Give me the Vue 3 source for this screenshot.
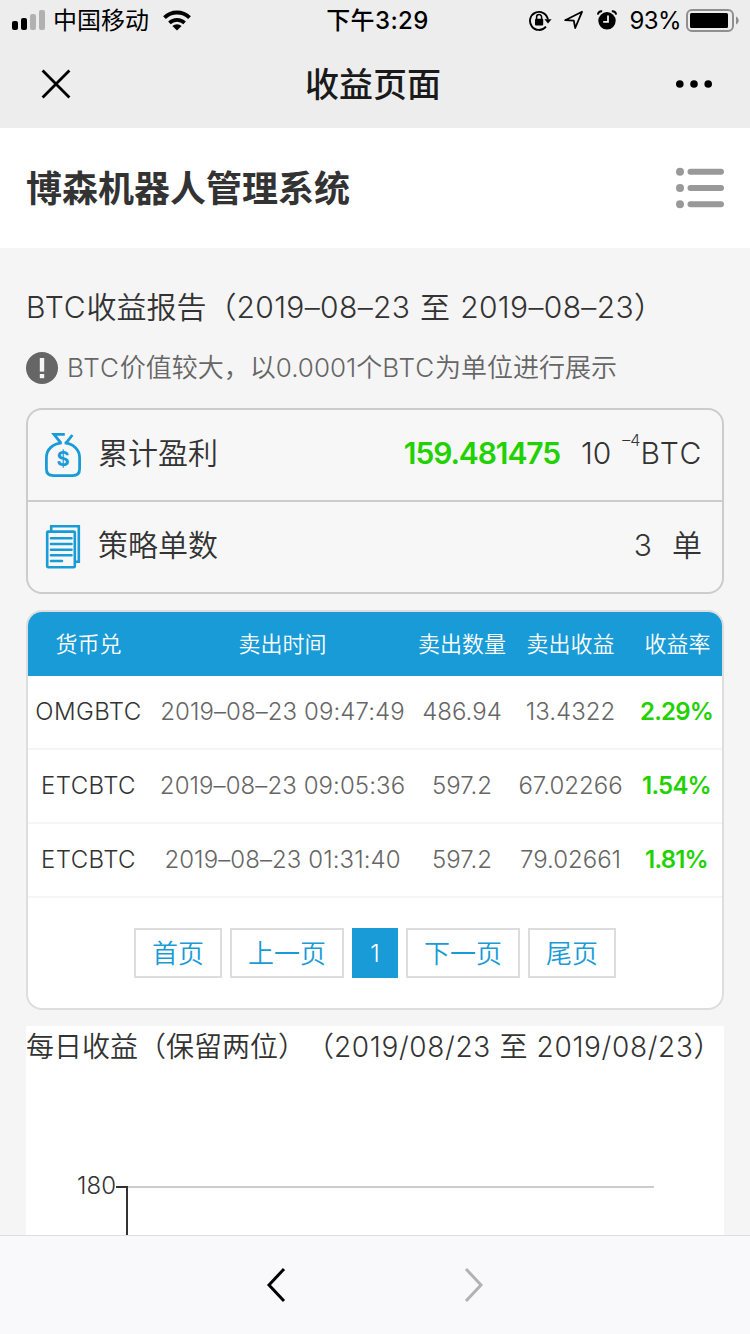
<template>
<div class="page">
    <div class="status-bar">
        <div class="status-left">
            <svg class="signal" width="33" height="20" viewBox="0 0 33 20">
                <rect x="0" y="11" width="6" height="9" rx="2"/>
                <rect x="9" y="8" width="6" height="12" rx="2"/>
                <rect x="18" y="4" width="6" height="16" rx="2" fill="#b1b1b1"/>
                <rect x="27" y="0" width="6" height="20" rx="2" fill="#b1b1b1"/>
            </svg>
            <span class="carrier">中国移动</span>
            <svg class="wifi" width="28" height="21" viewBox="0 0 28 21">
                <path d="M1.5 7.6a18 18 0 0 1 25 0" fill="none" stroke="#000" stroke-width="4"/>
                <path d="M6.4 12.9a11 11 0 0 1 15.2 0" fill="none" stroke="#000" stroke-width="3.6"/>
                <path d="M14 20.4l-4.6-4.4a6.6 6.6 0 0 1 9.2 0z"/>
            </svg>
        </div>
        <div class="clock">下午3:29</div>
        <div class="status-right">
            <svg width="23" height="21" viewBox="0 0 23 21">
                <path d="M17 16.6A9 9 0 1 1 18.9 9.5" fill="none" stroke="#000" stroke-width="1.9"/>
                <path d="M15.4 9.2h7.2l-3.6 4.2z"/>
                <rect x="6" y="8.8" width="8.2" height="6.6" rx="1"/>
                <path d="M7.6 9V7a2.5 2.5 0 0 1 5 0v2" fill="none" stroke="#000" stroke-width="1.5"/>
            </svg>
            <svg class="location" width="20" height="20" viewBox="0 0 20 20">
                <path d="M1.2 10.2L18 1.8 11.2 18 9.8 10.6z" fill="none" stroke="#000" stroke-width="1.8" stroke-linejoin="round"/>
            </svg>
            <svg class="alarm" width="20" height="20" viewBox="0 0 20 20">
                <circle cx="10" cy="10.8" r="8.7"/>
                <path d="M.8 4.6C1.2 2.4 3 1 5.2 1.3M19.2 4.6C18.8 2.4 17 1 14.8 1.3" fill="none" stroke="#000" stroke-width="1.8"/>
                <path d="M11 5.4v6.4H6.2" fill="none" stroke="#ededed" stroke-width="1.8"/>
            </svg>
            <span class="percent">93%</span>
            <svg width="53" height="23" viewBox="0 0 53 23">
                <rect x="1" y="1" width="46" height="21" rx="5" fill="none" stroke="#8f8f8f" stroke-width="2"/>
                <rect x="4" y="4" width="38" height="15" rx="1.5"/>
                <path d="M50 7.5c3.6 1.6 3.6 6.6 0 8z" fill="#8f8f8f"/>
            </svg>
        </div>
    </div>

    <div class="nav-bar">
        <svg width="30" height="30" viewBox="0 0 30 30">
            <path d="M1.6 1.6l26.8 26.8M28.4 1.6L1.6 28.4" fill="none" stroke="#000" stroke-width="2.8"/>
        </svg>
        <div class="nav-title">收益页面</div>
        <svg width="38" height="10" viewBox="0 0 38 10">
            <circle v-for="n in 3" :key="n" :cx="n * 14.2 - 9.4" cy="5" r="3.8"/>
        </svg>
    </div>

    <header class="header">
        <h1>博森机器人管理系统</h1>
        <svg width="48" height="42" viewBox="0 0 48 42" fill="#999">
            <template v-for="n in 3" :key="n">
                <circle cx="4" :cy="n * 16.2 - 11.4" r="4"/>
                <rect x="11.5" :y="n * 16.2 - 14.4" width="36.5" height="6" rx="3"/>
            </template>
        </svg>
    </header>

    <main class="content">
        <h2><span class="btc">BTC</span>收益报告（<span class="range">{{ debut }} 至 {{ fin }}</span>）</h2>
        <div class="tip">
            <svg width="32" height="32" viewBox="0 0 32 32">
                <circle cx="16" cy="16" r="16" fill="#666"/>
                <rect x="13.8" y="6" width="4.4" height="13.6" fill="#f5f5f5"/>
                <rect x="13.8" y="22" width="4.4" height="4.2" fill="#f5f5f5"/>
            </svg>
            <p><span class="btc">BTC</span>价值较大，以0.0001个<span class="btc">BTC</span>为单位进行展示</p>
        </div>

        <div class="summary">
            <div class="summary-row">
                <svg width="38" height="46" viewBox="0 0 38 46" fill="none" stroke="#189bd7" stroke-width="2.8">
                    <path d="M20.8 2.4H10l7 8.8M28.4 3l-6.4 8.2M17.8 10.9C9 11.4 2.4 17.5 2.4 25.5V37c0 4.6 2.5 6.6 7 6.6h19.2c4.5 0 7-2 7-6.6V25.5c0-8-6.6-14.1-15-14.6"/>
                    <text class="dollar" x="19" y="33.6">$</text>
                </svg>
                <span class="label">累计盈利</span>
                <span class="profit">159.481475</span>
                <span class="unit">10</span>
                <span class="power">–4</span>
                <span class="suffix">BTC</span>
            </div>
            <div class="summary-row">
                <svg width="38" height="46" viewBox="0 0 38 46" fill="none" stroke="#189bd7" stroke-width="2.6">
                    <path d="M7.2 7V2.2h27.6v35.6h-4"/>
                    <rect x="3.2" y="7.6" width="27.6" height="35.6" rx="1"/>
                    <path d="M7 14.3h20.5M7 20h20.5M7 25.7h20.5M7 31.3h20.5M7 37h11" stroke-linecap="round"/>
                </svg>
                <span class="label">策略单数</span>
                <span class="count">3</span>
                <span>单</span>
            </div>
        </div>

        <div class="orders">
            <div class="orders-head">
                <span v-for="titre in colonnes" :key="titre">{{ titre }}</span>
            </div>
            <div class="orders-row" v-for="ligne in lignes" :key="ligne.date">
                <span class="pair">{{ ligne.paire }}</span>
                <span class="date">{{ ligne.date }}</span>
                <span>{{ ligne.quantite }}</span>
                <span>{{ ligne.gain }}</span>
                <span class="rate">{{ ligne.taux }}</span>
            </div>
            <div class="pagination">
                <button>首页</button>
                <button>上一页</button>
                <button class="active">1</button>
                <button>下一页</button>
                <button>尾页</button>
            </div>
        </div>

        <div class="chart">
            <h3>每日收益（保留两位）（<span class="range">2019/08/23 至 2019/08/23</span>）</h3>
            <svg width="698" height="175" viewBox="0 0 698 175">
                <path d="M102 121h526" stroke="#ccc" stroke-width="2"/>
                <path d="M90 121h12M101 120v55" stroke="#333" stroke-width="2"/>
                <text class="tick" x="90" y="128">180</text>
            </svg>
        </div>
    </main>

    <footer class="toolbar">
        <svg width="20" height="36" viewBox="0 0 20 36">
            <path d="M18 2L3 18l15 16" fill="none" stroke="#000" stroke-width="3"/>
        </svg>
        <svg width="20" height="36" viewBox="0 0 20 36">
            <path d="M2 2l15 16L2 34" fill="none" stroke="#b2b2b2" stroke-width="3"/>
        </svg>
    </footer>
</div>
</template>

<script setup>
import { ref } from 'vue'

const debut = ref('2019–08–23')
const fin = ref('2019–08–23')

const colonnes = ['货币兑', '卖出时间', '卖出数量', '卖出收益', '收益率']

const lignes = ref([
    { paire: 'OMGBTC', date: '2019–08–23 09:47:49', quantite: '486.94', gain: '13.4322', taux: '2.29%' },
    { paire: 'ETCBTC', date: '2019–08–23 09:05:36', quantite: '597.2', gain: '67.02266', taux: '1.54%' },
    { paire: 'ETCBTC', date: '2019–08–23 01:31:40', quantite: '597.2', gain: '79.02661', taux: '1.81%' },
])
</script>

<style>
body{
    margin: 0;
    background-color: #f5f5f5;
}
</style>

<style scoped>
*{box-sizing: border-box; margin: 0; padding: 0;}
.page{
    width: 750px;
    height: 1334px;
    display: flex;
    flex-direction: column;
    overflow: hidden;
    background-color: #f5f5f5;
    color: #333;
    font-family: Inter, "Noto Sans CJK SC", sans-serif;
    font-weight: 350;
    text-spacing-trim: space-all;
    white-space: nowrap;
}
svg{
    display: block;
    flex: none;
}

.status-bar{
    height: 40px;
    padding: 0 11px 0 12px;
    display: grid;
    grid-template-columns: 1fr auto 1fr;
    align-items: center;
    background-color: #ededed;
    color: #000;
    font-size: 24px;
    font-weight: 400;
    line-height: 38px;
}
.status-left, .status-right{
    display: flex;
    align-items: center;
}
.status-right{
    justify-content: flex-end;
}
.carrier{
    margin: 0 14px 0 8px;
    padding-top: 2px;
}
.clock{
    padding: 2px 0 0 4px;
    font-weight: 500;
    letter-spacing: 0.4px;
}
.location{
    margin-left: 12px;
}
.alarm{
    margin-left: 13px;
}
.percent{
    margin: 0 5px 0 13px;
    padding-top: 2px;
    letter-spacing: -0.6px;
}

.nav-bar{
    height: 88px;
    padding: 0 37px 0 41px;
    display: flex;
    align-items: center;
    justify-content: space-between;
    background-color: #ededed;
    color: #1a1a1a;
}
.nav-title{
    margin-bottom: 4px;
    font-size: 34px;
    font-weight: 500;
}

.header{
    height: 120px;
    padding: 0 26px;
    display: flex;
    align-items: center;
    justify-content: space-between;
    background-color: #fff;
}
.header h1{
    margin-bottom: 4px;
    font-size: 36px;
    font-weight: 700;
}

.content{
    height: 987px;
    padding: 34px 26px 0;
    overflow: hidden;
}
.content h2{
    font-size: 30px;
    font-weight: 350;
    line-height: 50px;
    word-spacing: 1px;
    .range{
        letter-spacing: 0.35px;
    }
}
.btc{
    letter-spacing: 0.9px;
}
.tip{
    height: 32px;
    margin-top: 20px;
    display: flex;
    align-items: center;
    color: #666;
    p{
        margin-left: 9px;
        font-size: 26px;
        line-height: 30px;
    }
}

.summary{
    margin-top: 24px;
    border: 2px solid #ccc;
    border-radius: 16px;
    background-color: #f7f7f7;
}
.summary-row{
    height: 90px;
    padding: 0 20px 0 16px;
    display: flex;
    align-items: center;
    font-size: 30px;
    line-height: 86px;
    span{
        height: 90px;
    }
    .label{
        margin-left: 16px;
        margin-right: auto;
    }
    .profit{
        color: #21d100;
        font-weight: 600;
        letter-spacing: -1.1px;
    }
    .unit{
        margin-left: 21px;
    }
    .power{
        margin-left: 11px;
        font-size: 16px;
        line-height: 60px;
    }
    .suffix{
        margin-right: -1px;
        letter-spacing: 1.6px;
    }
    .count{
        margin-right: 20px;
    }
    .dollar{
        fill: #189bd7;
        stroke: none;
        font-size: 20px;
        font-weight: 700;
        text-anchor: middle;
    }
}
.summary-row + .summary-row{
    height: 92px;
    border-top: 2px solid #ccc;
}

.orders{
    height: 400px;
    margin-top: 16px;
    border: 2px solid #ddd;
    border-radius: 16px;
    background-color: #fff;
    overflow: hidden;
}
.orders-head, .orders-row{
    display: grid;
    grid-template-columns: 121px 267px 92px 125px 89px;
    justify-items: center;
}
.orders-head{
    height: 64px;
    background-color: #189bd7;
    color: #fff;
    font-size: 22px;
    line-height: 65px;
}
.orders-row{
    height: 74px;
    border-bottom: 2px solid #f5f5f5;
    color: #666;
    font-size: 24px;
    line-height: 71px;
    .pair{
        color: #333;
        letter-spacing: 0.4px;
    }
    .date{
        letter-spacing: 0.08px;
    }
    .rate{
        padding-right: 2px;
        color: #21d100;
        font-weight: 600;
        letter-spacing: -0.8px;
    }
}
.pagination{
    margin-top: 30px;
    display: flex;
    justify-content: center;
    gap: 8px;
    button{
        height: 50px;
        padding: 2px 16px 0;
        border: 2px solid #ddd;
        background-color: #fff;
        color: #189bd7;
        font-family: inherit;
        font-size: 26px;
        font-weight: 350;
        line-height: 44px;
    }
    .active{
        width: 46px;
        padding: 2px 0 0;
        border-color: #189bd7;
        background-color: #189bd7;
        color: #fff;
        font-size: 24px;
    }
}

.chart{
    margin-top: 16px;
    background-color: #fff;
    h3{
        height: 40px;
        font-size: 28px;
        font-weight: 350;
        line-height: 42px;
    }
    .range{
        letter-spacing: 0.65px;
    }
    .tick{
        fill: #333;
        font-size: 24px;
        text-anchor: end;
    }
}

.toolbar{
    height: 99px;
    border-top: 1px solid #ddd;
    display: flex;
    justify-content: center;
    align-items: center;
    gap: 178px;
    background-color: #f9f9fb;
}
</style>
